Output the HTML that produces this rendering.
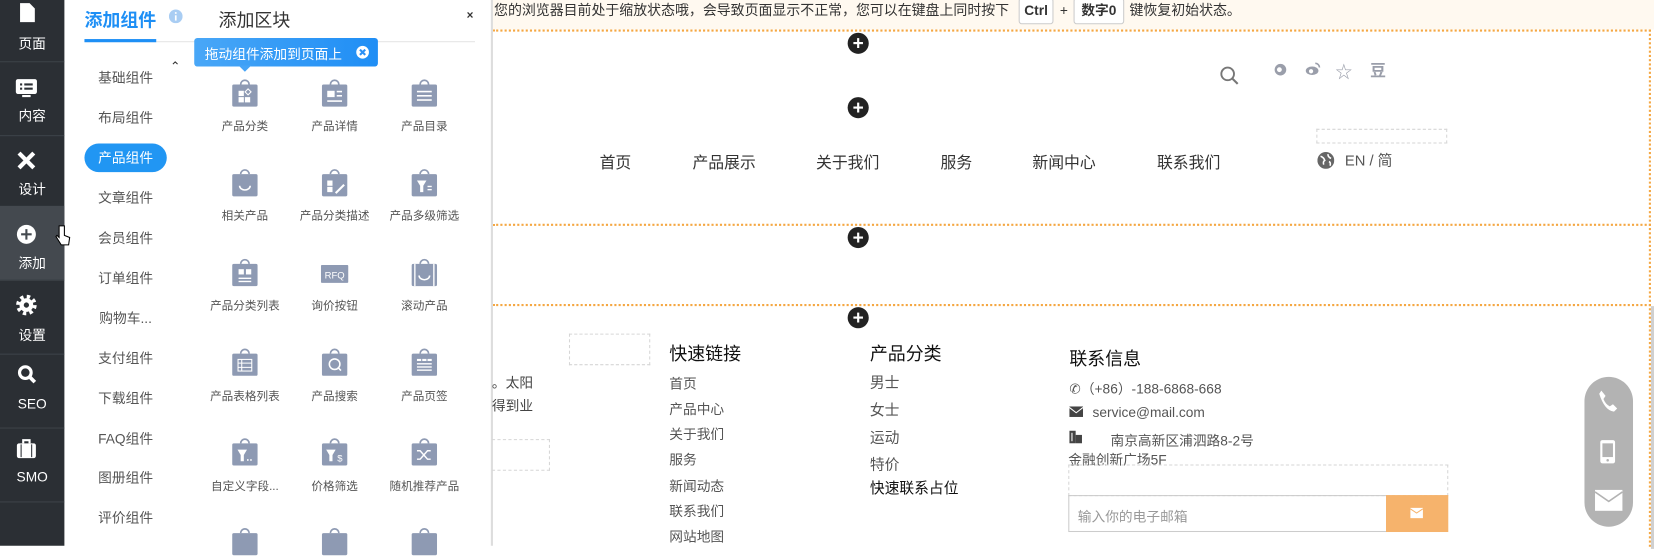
<!DOCTYPE html>
<html><head><meta charset="utf-8"><style>
*{margin:0;padding:0;box-sizing:border-box}
body{width:1654px;height:545px;overflow:hidden;background:#fff;font-family:"Liberation Sans","Noto Sans CJK SC",sans-serif;position:relative;color:#333}
#root{position:absolute;left:0;top:0;width:1567px;height:517px;transform:scale(1.0556);transform-origin:0 0}
.a{position:absolute;white-space:nowrap}
#sb{position:absolute;left:0;top:0;width:61px;height:517px;background:#2b2f34}
.si{position:absolute;left:0;width:61px;text-align:center;color:#fff;font-size:13px}
.dv{position:absolute;left:0;width:61px;height:1px;background:#3d4248}
.cat{position:absolute;left:80px;width:78px;text-align:center;font-size:13px;color:#555;line-height:20px}
.lb{position:absolute;width:90px;text-align:center;font-size:11px;color:#555}
.bag{position:absolute;width:26px;height:28px}
.pl{position:absolute;width:20px;height:20px;border-radius:50%;background:#222;color:#fff;font-size:18px;line-height:20px;text-align:center;font-weight:bold}
.hd{border-top:2px dotted #f5a742;position:absolute;left:467px;width:1097px;height:0}
.dash{position:absolute;border:1px dashed #d6d6d6}
.fl{position:absolute;font-size:13px;color:#555}
</style></head><body><div id="root">
<div id="sb">
<div style="position:absolute;left:0;top:195px;width:61px;height:70px;background:#44494f"></div>
<svg class="a" style="left:17px;top:2px" width="18" height="20" viewBox="0 0 18 20"><path d="M2 1h9l5 5v13H2z" fill="#fff"/></svg>
<div class="si" style="top:31px">页面</div>
<div class="dv" style="top:58px"></div>
<svg class="a" style="left:14px;top:74px" width="22" height="20" viewBox="0 0 22 20"><rect x="1" y="1" width="20" height="14" rx="2" fill="#fff"/><rect x="5" y="5" width="2" height="2" fill="#2b2f34"/><rect x="9" y="5" width="8" height="2" fill="#2b2f34"/><rect x="5" y="9" width="2" height="2" fill="#2b2f34"/><rect x="9" y="9" width="8" height="2" fill="#2b2f34"/><rect x="7" y="16" width="8" height="2" fill="#fff"/></svg>
<div class="si" style="top:99px">内容</div>
<div class="dv" style="top:128px"></div>
<svg class="a" style="left:15px;top:142px" width="20" height="20" viewBox="0 0 20 20"><path d="M3 3l14 14M17 3L3 17" stroke="#fff" stroke-width="4"/></svg>
<div class="si" style="top:169px">设计</div>
<svg class="a" style="left:15px;top:212px" width="20" height="20" viewBox="0 0 20 20"><circle cx="10" cy="10" r="9" fill="#fff"/><path d="M10 5v10M5 10h10" stroke="#44494f" stroke-width="2"/></svg>
<div class="si" style="top:239px">添加</div>
<div class="dv" style="top:265px"></div>
<svg class="a" style="left:15px;top:279px" width="20" height="20" viewBox="0 0 20 20"><circle cx="10" cy="10" r="8" fill="none" stroke="#fff" stroke-width="3.5" stroke-dasharray="3.2 3.1"/><circle cx="10" cy="10" r="6.5" fill="#fff"/><circle cx="10" cy="10" r="2.5" fill="#2b2f34"/></svg>
<div class="si" style="top:307px">设置</div>
<div class="dv" style="top:335px"></div>
<svg class="a" style="left:16px;top:345px" width="20" height="20" viewBox="0 0 20 20"><circle cx="8" cy="8" r="5.5" fill="none" stroke="#fff" stroke-width="3"/><path d="M12 12l5 5" stroke="#fff" stroke-width="3.5"/></svg>
<div class="si" style="top:375px">SEO</div>
<div class="dv" style="top:405px"></div>
<svg class="a" style="left:15px;top:415px" width="20" height="20" viewBox="0 0 20 20"><rect x="1" y="5" width="18" height="14" rx="2" fill="#fff"/><path d="M7 5V2h6v3" fill="none" stroke="#fff" stroke-width="2"/><path d="M5 6v12M15 6v12" stroke="#2b2f34" stroke-width="1"/></svg>
<div class="si" style="top:444px">SMO</div>
<div class="dv" style="top:475px"></div>
</div>
<svg class="a" style="left:52px;top:212px" width="16" height="22" viewBox="0 0 16 22"><path d="M4 2v11l-2-2-1 1 5 8h7l1-7-5-2V2z" fill="#fff" stroke="#000" stroke-width="1"/></svg>

<div class="a" style="left:80px;top:5px;font-size:17px;font-weight:bold;color:#1e8ff5">添加组件</div>
<svg class="a" style="left:160px;top:9px" width="13" height="13" viewBox="0 0 13 13"><circle cx="6.5" cy="6.5" r="6.5" fill="#a9cdf3"/><rect x="5.7" y="5.5" width="1.6" height="5" fill="#fff"/><rect x="5.7" y="2.5" width="1.6" height="1.6" fill="#fff"/></svg>
<div class="a" style="left:207px;top:5px;font-size:17px;color:#333">添加区块</div>
<div class="a" style="left:442px;top:9px;font-size:11px;color:#333;font-weight:bold">×</div>
<div class="a" style="left:80px;top:39px;width:370px;height:1px;background:#e5e5e5"></div>
<div class="a" style="left:80px;top:37px;width:68px;height:3px;background:#1e8ff5"></div>
<div class="a" style="left:184px;top:36px;width:174px;height:27px;border-radius:3px;background:linear-gradient(90deg,#49a7f7,#1f8ef5)"></div>
<div class="a" style="left:226px;top:62px;width:0;height:0;border-left:6px solid transparent;border-right:6px solid transparent;border-top:6px solid #45a4f7"></div>
<div class="a" style="left:194px;top:41px;font-size:13px;color:#fff">拖动组件添加到页面上</div>
<svg class="a" style="left:337px;top:43px" width="13" height="13" viewBox="0 0 13 13"><circle cx="6.5" cy="6.5" r="6" fill="#fff"/><path d="M4 4l5 5M9 4l-5 5" stroke="#2b90f5" stroke-width="2"/></svg>
<div class="a" style="left:161px;top:56px;font-size:12px;color:#333">⌃</div>

<div class="a" style="left:80px;top:136px;width:78px;height:27px;border-radius:14px;background:#2196f3"></div>
<div class="cat" style="top:64px">基础组件</div>
<div class="cat" style="top:102px">布局组件</div>
<div class="cat" style="top:140px;color:#fff">产品组件</div>
<div class="cat" style="top:178px">文章组件</div>
<div class="cat" style="top:216px">会员组件</div>
<div class="cat" style="top:254px">订单组件</div>
<div class="cat" style="top:292px">购物车...</div>
<div class="cat" style="top:330px">支付组件</div>
<div class="cat" style="top:368px">下载组件</div>
<div class="cat" style="top:406px">FAQ组件</div>
<div class="cat" style="top:443px">图册组件</div>
<div class="cat" style="top:481px">评价组件</div>

<svg width="0" height="0" style="position:absolute"><defs><g id="bg"><path d="M9 6a4 4 0 0 1 8 0" fill="none" stroke="#8e9ab3" stroke-width="1.6"/><rect x="1" y="6" width="24" height="21" rx="1.5" fill="#8e9ab3"/></g></defs></svg>
<svg class="bag" style="left:219px;top:74px" viewBox="0 0 26 28"><use href="#bg"/><rect x="7" y="12" width="5" height="5" fill="#fff"/><rect x="7" y="18" width="5" height="5" fill="#fff"/><rect x="13" y="18" width="5" height="5" fill="#fff"/><rect x="14" y="11" width="4" height="4" fill="none" stroke="#fff" transform="rotate(45 16 13)"/></svg>
<svg class="bag" style="left:304px;top:74px" viewBox="0 0 26 28"><use href="#bg"/><rect x="6" y="12" width="7" height="6" fill="#fff"/><rect x="15" y="12" width="5" height="1.5" fill="#fff"/><rect x="15" y="16" width="5" height="1.5" fill="#fff"/><rect x="6" y="21" width="14" height="1.5" fill="#fff"/></svg>
<svg class="bag" style="left:389px;top:74px" viewBox="0 0 26 28"><use href="#bg"/><rect x="6" y="12" width="14" height="1.5" fill="#fff"/><rect x="6" y="16" width="14" height="1.5" fill="#fff"/><rect x="6" y="20" width="14" height="1.5" fill="#fff"/></svg>
<div class="lb" style="left:187px;top:111px">产品分类</div>
<div class="lb" style="left:272px;top:111px">产品详情</div>
<div class="lb" style="left:357px;top:111px">产品目录</div>
<svg class="bag" style="left:219px;top:159px" viewBox="0 0 26 28"><use href="#bg"/><path d="M8 17a5 4 0 0 0 10 0" fill="none" stroke="#fff" stroke-width="1.5"/></svg>
<svg class="bag" style="left:304px;top:159px" viewBox="0 0 26 28"><use href="#bg"/><rect x="6" y="12" width="5" height="5" fill="#fff"/><rect x="6" y="18" width="5" height="5" fill="#fff"/><path d="M14 24l8-8" stroke="#fff" stroke-width="2"/></svg>
<svg class="bag" style="left:389px;top:159px" viewBox="0 0 26 28"><use href="#bg"/><path d="M6 12h9l-3 5v6h-3v-6z" fill="#fff"/><rect x="16" y="17" width="4" height="1.3" fill="#fff"/><rect x="16" y="20" width="4" height="1.3" fill="#fff"/></svg>
<div class="lb" style="left:187px;top:196px">相关产品</div>
<div class="lb" style="left:272px;top:196px">产品分类描述</div>
<div class="lb" style="left:357px;top:196px">产品多级筛选</div>
<svg class="bag" style="left:219px;top:244px" viewBox="0 0 26 28"><use href="#bg"/><rect x="7" y="11" width="5" height="5" fill="#fff"/><rect x="14" y="11" width="5" height="5" fill="#fff"/><rect x="7" y="19" width="12" height="1.3" fill="#fff"/><rect x="7" y="22" width="12" height="1.3" fill="#fff"/></svg>
<svg class="bag" style="left:304px;top:248px" viewBox="0 0 26 28"><rect x="0" y="3" width="26" height="17" rx="1" fill="#8e9ab3"/><text x="13" y="16" font-size="9" fill="#fff" text-anchor="middle" font-family="Liberation Sans">RFQ</text></svg>
<svg class="bag" style="left:389px;top:244px" viewBox="0 0 26 28"><use href="#bg"/><path d="M8 17a5 4 0 0 0 10 0" fill="none" stroke="#fff" stroke-width="1.5"/><path d="M4 6v21M22 6v21" stroke="#fff" stroke-width="1.3"/></svg>
<div class="lb" style="left:187px;top:281px">产品分类列表</div>
<div class="lb" style="left:272px;top:281px">询价按钮</div>
<div class="lb" style="left:357px;top:281px">滚动产品</div>
<svg class="bag" style="left:219px;top:329px" viewBox="0 0 26 28"><use href="#bg"/><rect x="6.5" y="11.5" width="13" height="11" fill="none" stroke="#fff"/><path d="M6.5 15h13M6.5 19h13M10 11.5v11" stroke="#fff"/></svg>
<svg class="bag" style="left:304px;top:329px" viewBox="0 0 26 28"><use href="#bg"/><circle cx="13" cy="16" r="5" fill="none" stroke="#fff" stroke-width="1.5"/><path d="M16 19l3 3" stroke="#fff" stroke-width="1.5"/></svg>
<svg class="bag" style="left:389px;top:329px" viewBox="0 0 26 28"><use href="#bg"/><rect x="6" y="11" width="4" height="2" fill="#fff"/><rect x="11" y="11" width="4" height="2" fill="#fff"/><rect x="16" y="11" width="4" height="2" fill="#fff"/><rect x="6" y="15" width="14" height="1.3" fill="#fff"/><rect x="6" y="18" width="14" height="1.3" fill="#fff"/><rect x="6" y="21" width="14" height="1.3" fill="#fff"/></svg>
<div class="lb" style="left:187px;top:367px">产品表格列表</div>
<div class="lb" style="left:272px;top:367px">产品搜索</div>
<div class="lb" style="left:357px;top:367px">产品页签</div>
<svg class="bag" style="left:219px;top:414px" viewBox="0 0 26 28"><use href="#bg"/><path d="M6 12h9l-3 5v6h-3v-6z" fill="#fff"/><rect x="15" y="21" width="1.5" height="1.5" fill="#fff"/><rect x="18" y="21" width="1.5" height="1.5" fill="#fff"/></svg>
<svg class="bag" style="left:304px;top:414px" viewBox="0 0 26 28"><use href="#bg"/><path d="M5 12h9l-3 5v6H8v-6z" fill="#fff"/><text x="18" y="23" font-size="9" fill="#fff" text-anchor="middle" font-family="Liberation Sans">$</text></svg>
<svg class="bag" style="left:389px;top:414px" viewBox="0 0 26 28"><use href="#bg"/><path d="M6 13h3l7 8h3M6 21h3l7-8h3" fill="none" stroke="#fff" stroke-width="1.4"/></svg>
<div class="lb" style="left:187px;top:452px">自定义字段...</div>
<div class="lb" style="left:272px;top:452px">价格筛选</div>
<div class="lb" style="left:357px;top:452px">随机推荐产品</div>
<svg class="bag" style="left:219px;top:499px" viewBox="0 0 26 28"><use href="#bg"/></svg>
<svg class="bag" style="left:304px;top:499px" viewBox="0 0 26 28"><use href="#bg"/></svg>
<svg class="bag" style="left:389px;top:499px" viewBox="0 0 26 28"><use href="#bg"/></svg>

<div class="a" style="left:465px;top:0;width:2px;height:517px;background:#ddd"></div>

<div class="a" style="left:467px;top:0;width:1100px;height:28px;background:#fff9f0"></div>
<div class="a" style="left:468px;top:2px;font-size:13.2px;color:#333;line-height:16px">您的浏览器目前处于缩放状态哦，会导致页面显示不正常，您可以在键盘上同时按下</div>
<div class="a" style="left:965px;top:-2px;width:33px;height:25px;border:1px solid #ccc;border-radius:3px;background:#fff;font-size:13px;font-weight:bold;text-align:center;line-height:22px">Ctrl</div>
<div class="a" style="left:1004px;top:2px;font-size:13px">+</div>
<div class="a" style="left:1017px;top:-2px;width:48px;height:25px;border:1px solid #ccc;border-radius:3px;background:#fff;font-size:13px;font-weight:bold;text-align:center;line-height:22px">数字0</div>
<div class="a" style="left:1070px;top:2px;font-size:13.2px;line-height:16px">键恢复初始状态。</div>

<div class="hd" style="top:28px"></div>
<div class="hd" style="top:212px"></div>
<div class="hd" style="top:288px"></div>
<div class="a" style="left:1562px;top:28px;height:490px;border-left:2px dotted #f5a742"></div>
<div class="a" style="left:1564px;top:290px;width:3px;height:230px;background:#d0d0d0"></div>

<div class="pl" style="left:803px;top:31px">+</div>
<div class="pl" style="left:803px;top:92px">+</div>
<div class="pl" style="left:803px;top:215px">+</div>
<div class="pl" style="left:803px;top:291px">+</div>

<svg class="a" style="left:1155px;top:62px" width="20" height="20" viewBox="0 0 20 20"><circle cx="8" cy="8" r="6" fill="none" stroke="#777" stroke-width="1.8"/><path d="M12.5 12.5l5 5" stroke="#777" stroke-width="2"/></svg>
<svg class="a" style="left:1207px;top:60px" width="12" height="12" viewBox="0 0 12 12"><circle cx="6" cy="6" r="5.5" fill="#9a9eaa"/><circle cx="5" cy="6" r="2.3" fill="#fff"/></svg>
<svg class="a" style="left:1236px;top:58px" width="16" height="14" viewBox="0 0 16 14"><ellipse cx="7" cy="9" rx="6" ry="4" fill="#9a9eaa"/><circle cx="6" cy="9.5" r="2" fill="#fff"/><path d="M10 2a4 4 0 0 1 4 4" fill="none" stroke="#9a9eaa" stroke-width="1.5"/></svg>
<div class="a" style="left:1265px;top:55px;font-size:16px;color:#9a9eaa">☆</div>
<div class="a" style="left:1298px;top:56px;font-size:15px;color:#9a9eaa;font-weight:bold">豆</div>
<div class="dash" style="left:1247px;top:122px;width:124px;height:14px"></div>
<div class="a" style="left:568px;top:143px;font-size:15px">首页</div>
<div class="a" style="left:656px;top:143px;font-size:15px">产品展示</div>
<div class="a" style="left:773px;top:143px;font-size:15px">关于我们</div>
<div class="a" style="left:891px;top:143px;font-size:15px">服务</div>
<div class="a" style="left:978px;top:143px;font-size:15px">新闻中心</div>
<div class="a" style="left:1096px;top:143px;font-size:15px">联系我们</div>
<svg class="a" style="left:1248px;top:144px" width="16" height="16" viewBox="0 0 16 16"><circle cx="8" cy="8" r="8" fill="#666"/><path d="M3 4q3 1 4 4-2 1-1 4M10 2q0 3 3 4M11 9q2 1 1 4" stroke="#fff" stroke-width="1.5" fill="none"/></svg>
<div class="a" style="left:1274px;top:142px;font-size:14px;color:#555">EN / 简</div>

<div class="dash" style="left:539px;top:316px;width:77px;height:30px"></div>
<div class="a" style="left:466px;top:352px;font-size:13px;color:#444">。太阳</div>
<div class="a" style="left:466px;top:374px;font-size:13px;color:#444">得到业</div>
<div class="dash" style="left:466px;top:416px;width:55px;height:30px;border-left:none"></div>
<div class="a" style="left:634px;top:321px;font-size:17px;color:#111">快速链接</div>
<div class="fl" style="left:634px;top:353px">首页</div>
<div class="fl" style="left:634px;top:377px">产品中心</div>
<div class="fl" style="left:634px;top:401px">关于我们</div>
<div class="fl" style="left:634px;top:425px">服务</div>
<div class="fl" style="left:634px;top:450px">新闻动态</div>
<div class="fl" style="left:634px;top:474px">联系我们</div>
<div class="fl" style="left:634px;top:498px">网站地图</div>
<div class="a" style="left:824px;top:321px;font-size:17px;color:#111">产品分类</div>
<div class="fl" style="left:824px;top:352px;font-size:14px">男士</div>
<div class="fl" style="left:824px;top:378px;font-size:14px">女士</div>
<div class="fl" style="left:824px;top:404px;font-size:14px">运动</div>
<div class="fl" style="left:824px;top:430px;font-size:14px">特价</div>
<div class="fl" style="left:824px;top:452px;font-size:14px;color:#111">快速联系占位</div>
<div class="a" style="left:1013px;top:326px;font-size:17px;color:#111">联系信息</div>
<div class="fl" style="left:1013px;top:358px;font-size:13px">&#9990;（+86）-188-6868-668</div>
<svg class="a" style="left:1013px;top:385px" width="13" height="10" viewBox="0 0 13 10"><rect width="13" height="10" fill="#444"/><path d="M0 1l6.5 5L13 1" stroke="#fff" fill="none"/></svg>
<div class="fl" style="left:1035px;top:383px">service@mail.com</div>
<svg class="a" style="left:1013px;top:408px" width="12" height="12" viewBox="0 0 12 12"><rect x="0" y="0" width="6" height="12" fill="#444"/><rect x="6" y="4" width="6" height="8" fill="#444"/><rect x="2" y="2" width="1" height="8" fill="#fff"/></svg>
<div class="fl" style="left:1052px;top:407px">南京高新区浦泗路8-2号</div>
<div class="fl" style="left:1012px;top:425px">金融创新广场5F</div>
<div class="dash" style="left:1012px;top:440px;width:360px;height:30px"></div>
<div class="a" style="left:1012px;top:469px;width:302px;height:35px;border:1px solid #ccc;font-size:13px;color:#999;padding:9px 8px">输入你的电子邮箱</div>
<div class="a" style="left:1313px;top:469px;width:59px;height:35px;background:#f6b36c"></div>
<svg class="a" style="left:1336px;top:481px" width="12" height="10" viewBox="0 0 12 10"><rect width="12" height="10" fill="#fff"/><path d="M0 1l6 4 6-4" stroke="#f6b36c" fill="none"/></svg>

<div class="a" style="left:1501px;top:357px;width:46px;height:142px;border-radius:23px;background:#b3b3b3"></div>
<svg class="a" style="left:1512px;top:368px" width="22" height="24" viewBox="0 0 22 24"><path d="M5 2l4 5-2 3q2 5 6 7l3-2 4 4-3 3Q8 21 3 5z" fill="#fff"/></svg>
<svg class="a" style="left:1515px;top:416px" width="16" height="24" viewBox="0 0 16 24"><rect x="1" y="1" width="14" height="22" rx="2" fill="#fff"/><rect x="3" y="4" width="10" height="13" fill="#b3b3b3"/><circle cx="8" cy="20" r="1.2" fill="#b3b3b3"/></svg>
<svg class="a" style="left:1511px;top:464px" width="26" height="20" viewBox="0 0 26 20"><rect width="26" height="20" fill="#fff"/><path d="M0 2l13 9 13-9" stroke="#b3b3b3" stroke-width="1.5" fill="none"/></svg>
</div></body></html>
